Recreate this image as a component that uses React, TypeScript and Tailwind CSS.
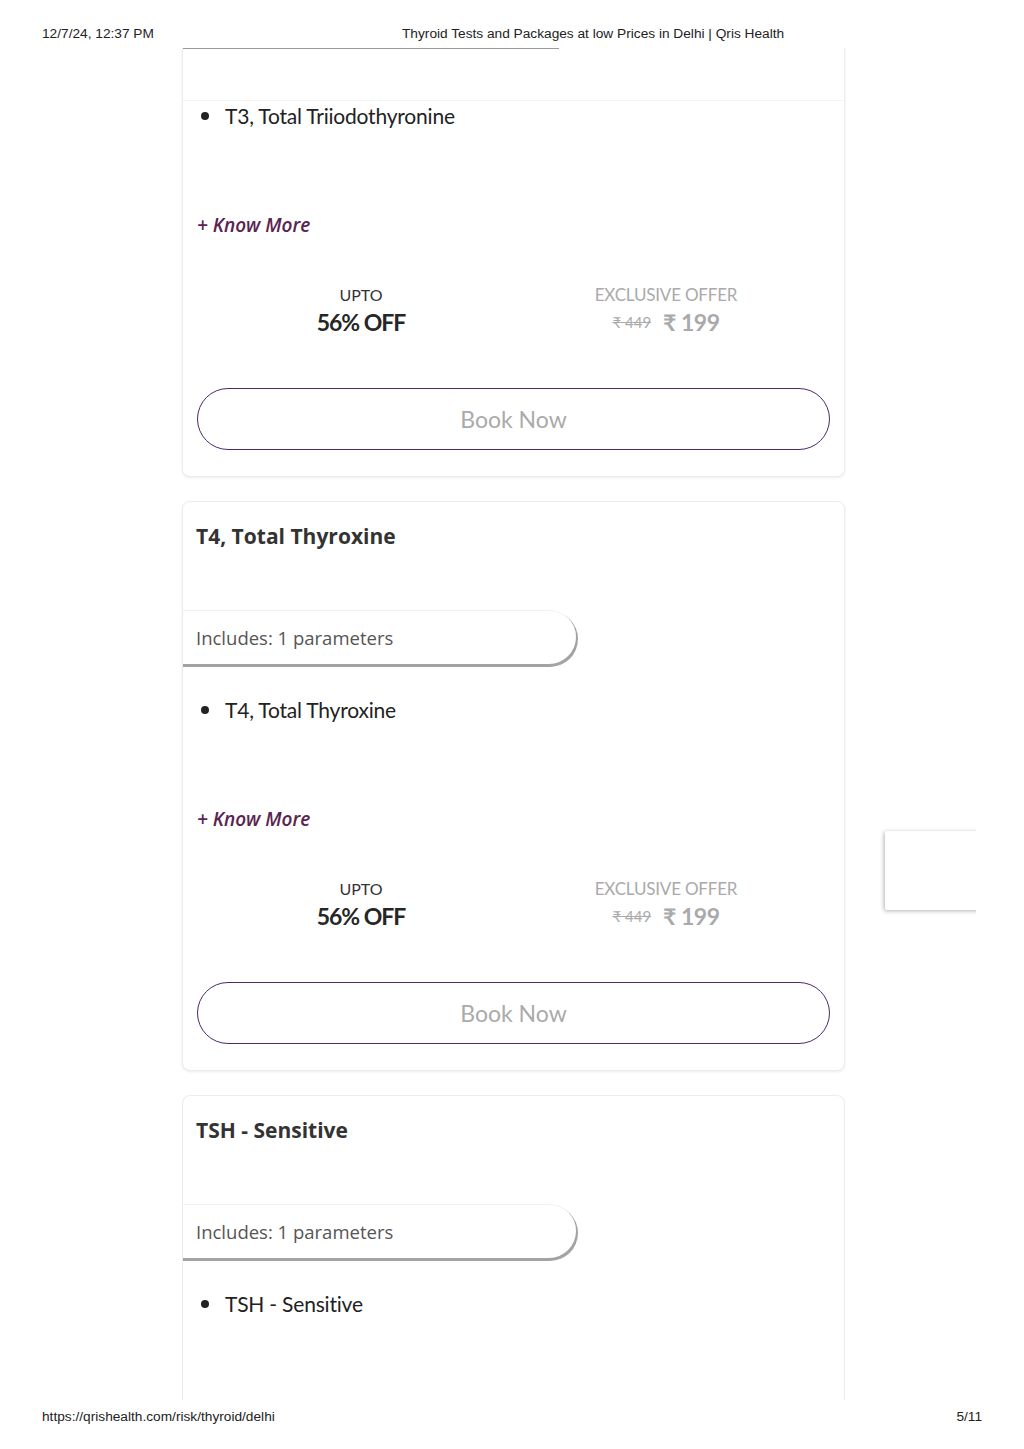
import React from 'react'

const lato = { fontFamily: 'Lato, "Noto Sans", sans-serif' }
const open = { fontFamily: '"Open Sans", "Noto Sans", sans-serif' }

function Bullet({ text }: { text: string }) {
  return (
    <div className="flex items-center h-[30px] pl-[18px]" style={lato}>
      <span className="w-[8px] h-[8px] rounded-full bg-[#222] mr-[16px]" />
      <span className="text-[21px] text-[#222] tracking-[-0.2px]">{text}</span>
    </div>
  )
}

function Bottom() {
  return (
    <>
      <div className="mt-[80px] h-[28px] flex items-center pl-[14px]" style={open}>
        <span className="text-[19px] italic font-semibold text-[#5a2350]">+ Know More</span>
      </div>
      <div className="mt-[46px] mx-auto w-[610px] grid grid-cols-2 text-center" style={lato}>
        <div>
          <div className="h-[20px] leading-[20px] text-[16px] text-[#333]">UPTO</div>
          <div className="mt-[2px] h-[30px] leading-[30px] text-[23px] font-bold text-[#262626] tracking-[-1px]">56% OFF</div>
        </div>
        <div>
          <div className="h-[20px] leading-[20px] text-[17px] text-[#aaa] tracking-[-0.2px]">EXCLUSIVE OFFER</div>
          <div className="mt-[2px] h-[30px] flex items-center justify-center gap-[12px] text-[#aaa]">
            <span className="text-[15px] line-through">₹ 449</span>
            <span className="text-[23px] font-bold tracking-[-0.5px]">₹ 199</span>
          </div>
        </div>
      </div>
      <div className="mt-[51px] mx-[14px] h-[62px] rounded-full border-[1.5px] border-[#4b2a6b] flex items-center justify-center" style={lato}>
        <span className="text-[23px] text-[#aaa]">Book Now</span>
      </div>
    </>
  )
}

function Top({ title }: { title: string }) {
  return (
    <>
      <div className="pl-[13px] h-[30px] leading-[30px] text-[21px] font-bold text-[#333]" style={open}>
        {title}
      </div>
      <div className="mt-[59px] w-[393px] h-[54px] rounded-r-[30px] border-t border-[#f2f2f2] shadow-[1px_2px_0_1px_#a3a3a3] flex items-center pl-[13px]" style={open}>
        <span className="text-[18.5px] text-[#555]">Includes: 1 parameters</span>
      </div>
      <div className="mt-[31px]">
        <Bullet text={title} />
      </div>
    </>
  )
}

function Card({ title }: { title: string }) {
  return (
    <div className="w-[663px] rounded-lg border border-[#ececec] shadow-[0_1px_3px_rgba(0,0,0,0.08)] bg-white pt-[19px] pb-[26px]">
      <Top title={title} />
      <Bottom />
    </div>
  )
}

export default function App() {
  return (
    <div className="w-[1024px] h-[1449px] bg-white relative" style={{ fontFamily: '"Liberation Sans", Arial, sans-serif' }}>
      <div className="h-[48px] flex items-start pt-[26px] px-[42px] text-[13.7px] leading-[16px] text-[#222]">
        <span className="w-[360px]">12/7/24, 12:37 PM</span>
        <span>Thyroid Tests and Packages at low Prices in Delhi | Qris Health</span>
      </div>

      <div className="relative w-[976px] h-[1352px] overflow-hidden">
        <div className="ml-[182px] flex flex-col gap-[24px]">
          {/* first card, top cut off by the page break */}
          <div className="w-[663px] rounded-b-lg border-x border-b border-[#ececec] shadow-[0_1px_3px_rgba(0,0,0,0.08)] bg-white pb-[26px]">
            <div className="w-[376px] h-px bg-[#9a9a9a]" />
            <div className="h-[51px]" />
            <div className="border-t border-[#f4f4f4]">
              <Bullet text="T3, Total Triiodothyronine" />
            </div>
            <Bottom />
          </div>
          <Card title="T4, Total Thyroxine" />
          {/* last card, cut off at the bottom of the page */}
          <div className="w-[663px] h-[330px] rounded-t-lg border-x border-t border-[#ececec] bg-white pt-[19px]">
            <Top title="TSH - Sensitive" />
          </div>
        </div>

        {/* floating side widget */}
        <div className="absolute left-[885px] top-[783px] w-[120px] h-[79px] bg-white rounded-l-[2px] shadow-[-1px_1px_4px_rgba(0,0,0,0.3)]" />
      </div>

      <div className="h-[49px] flex items-start pt-[9px] px-[42px] justify-between text-[13.7px] leading-[16px] text-[#222]">
        <span>https://qrishealth.com/risk/thyroid/delhi</span>
        <span>5/11</span>
      </div>
    </div>
  )
}
